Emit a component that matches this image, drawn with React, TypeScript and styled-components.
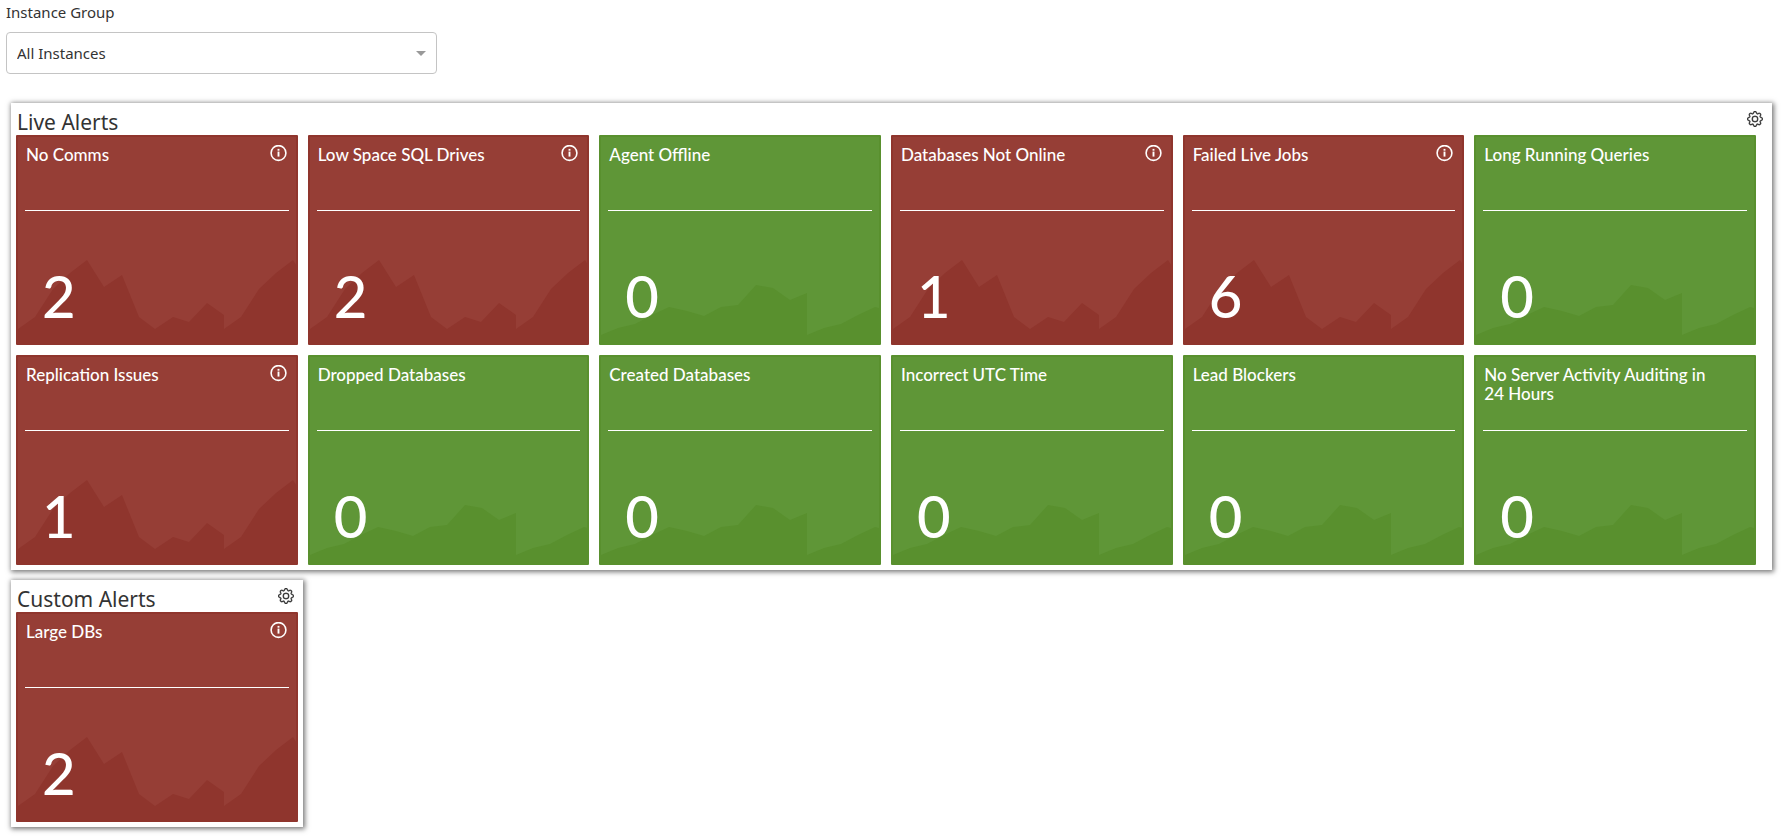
import React from "react";
import styled, { createGlobalStyle } from "styled-components";
import { BsGear } from "react-icons/bs";

type Status = "alert" | "ok";

interface Alert {
  name: string;
  count: number;
  status: Status;
}

const liveAlerts: Alert[] = [
  { name: "No Comms", count: 2, status: "alert" },
  { name: "Low Space SQL Drives", count: 2, status: "alert" },
  { name: "Agent Offline", count: 0, status: "ok" },
  { name: "Databases Not Online", count: 1, status: "alert" },
  { name: "Failed Live Jobs", count: 6, status: "alert" },
  { name: "Long Running Queries", count: 0, status: "ok" },
  { name: "Replication Issues", count: 1, status: "alert" },
  { name: "Dropped Databases", count: 0, status: "ok" },
  { name: "Created Databases", count: 0, status: "ok" },
  { name: "Incorrect UTC Time", count: 0, status: "ok" },
  { name: "Lead Blockers", count: 0, status: "ok" },
  { name: "No Server Activity Auditing in 24 Hours", count: 0, status: "ok" },
];

const customAlerts: Alert[] = [{ name: "Large DBs", count: 2, status: "alert" }];

const palette = {
  alert: { base: "#963e36", dark: "#8f352d" },
  ok: { base: "#5f9637", dark: "#59902e" },
};

const trend = {
  alert:
    "0,192 17,180 35,152 52,136 69,123 86,150 104,138 121,180 137,192 155,180 171,185 189,166 206,178 206,210 0,210",
  ok: "0,198 17,191 34,187 51,178 68,170 86,174 103,179 120,170 137,168 155,148 172,151 189,163 206,156 206,210 0,210",
};

const trendRepeats = [0, 206, 412, 618];

const GlobalStyle = createGlobalStyle`
  * { box-sizing: border-box; }
  body {
    margin: 0;
    background: #fff;
    color: #333;
    font-family: "Noto Sans", "Open Sans", sans-serif;
  }
`;

const Page = styled.main`
  display: flex;
  flex-direction: column;
  padding: 2px 12px 8px 11px;
`;

const Filter = styled.div`
  display: flex;
  flex-direction: column;
  gap: 10px;
  width: 431px;
  max-width: 100%;
  margin: 0 0 29px -5px;
`;

const FilterLabel = styled.label`
  font-size: 15px;
  line-height: 20px;
`;

const SelectBox = styled.div`
  display: grid;
  align-items: center;

  > * {
    grid-area: 1 / 1;
  }
`;

const Select = styled.select`
  appearance: none;
  width: 100%;
  height: 42px;
  padding: 0 32px 0 10px;
  border: 1px solid #c4c4c4;
  border-radius: 4px;
  background: #fff;
  color: #333;
  font: inherit;
  font-size: 15px;
`;

const Caret = styled.svg`
  justify-self: end;
  margin-right: 11px;
  pointer-events: none;
`;

const Panel = styled.section<{ $compact?: boolean }>`
  width: ${(p) => (p.$compact ? "292px" : "100%")};
  margin-bottom: 10px;
  padding: 0 ${(p) => (p.$compact ? 5 : 16)}px 5px 5px;
  background: #fff;
  box-shadow: 1px 1px 5px 1px #777;
`;

const PanelHeader = styled.header<{ $compact?: boolean }>`
  display: flex;
  align-items: flex-start;
  justify-content: space-between;
  height: 32px;
  padding: 4px 0 0 1px;
  margin-right: ${(p) => (p.$compact ? 4 : -7)}px;
`;

const PanelTitle = styled.h2`
  margin: 0;
  font-size: 21px;
  font-weight: 400;
  line-height: 30px;
`;

const IconButton = styled.button`
  display: flex;
  flex-shrink: 0;
  margin: 0;
  padding: 0;
  border: 0;
  background: none;
  color: inherit;
  cursor: pointer;
`;

const GearButton = styled(IconButton)`
  margin-top: 4px;
`;

const TileGrid = styled.div<{ $compact?: boolean }>`
  display: grid;
  grid-template-columns: repeat(${(p) => (p.$compact ? 1 : 6)}, minmax(0, 1fr));
  gap: 10px;
`;

const TileCard = styled.article<{ $status: Status }>`
  display: grid;
  min-height: 210px;
  overflow: hidden;
  border: 2px solid ${(p) => palette[p.$status].dark};
  border-radius: 1px;
  background: ${(p) => palette[p.$status].base};
  color: #fff;
  font-family: Lato, "Noto Sans", sans-serif;
  font-weight: 500;

  > * {
    grid-area: 1 / 1;
    min-width: 0;
  }
`;

const TrendArt = styled.svg`
  width: 100%;
  height: 206px;
  align-self: end;
`;

const TileBody = styled.div`
  display: flex;
  flex-direction: column;
  padding: 0 7px;
`;

const TileHeader = styled.div`
  display: grid;
  grid-template-columns: minmax(0, 1fr) 17px;
  align-items: start;
  gap: 12px;
  height: 74px;
  padding: 8px 2px 0 1px;
  border-bottom: 1px solid #fff;
`;

const TileTitle = styled.h3`
  margin: 0;
  font-size: 17px;
  font-weight: inherit;
  line-height: 19px;
`;

const Count = styled.div`
  padding: 50px 0 0 17px;
  font-size: 58px;
  line-height: 70px;
`;

function InfoIcon() {
  return (
    <svg width="17" height="17" viewBox="0 0 17 17" fill="none" stroke="currentColor" aria-hidden="true">
      <circle cx="8.5" cy="8" r="7.4" strokeWidth="1.6" />
      <path d="M8.5 6.6v5" strokeWidth="1.9" />
      <path d="M8.5 3.9v1.8" strokeWidth="1.9" />
    </svg>
  );
}

function Tile({ alert }: { alert: Alert }) {
  return (
    <TileCard $status={alert.status}>
      <TrendArt aria-hidden="true">
        {trendRepeats.map((x) => (
          <polygon
            key={x}
            points={trend[alert.status]}
            fill={palette[alert.status].dark}
            transform={`translate(${x} 0)`}
          />
        ))}
      </TrendArt>
      <TileBody>
        <TileHeader>
          <TileTitle>{alert.name}</TileTitle>
          {alert.status === "alert" && (
            <IconButton type="button" aria-label={`About ${alert.name}`}>
              <InfoIcon />
            </IconButton>
          )}
        </TileHeader>
        <Count>{alert.count}</Count>
      </TileBody>
    </TileCard>
  );
}

function AlertPanel({ title, alerts, compact }: { title: string; alerts: Alert[]; compact?: boolean }) {
  return (
    <Panel $compact={compact}>
      <PanelHeader $compact={compact}>
        <PanelTitle>{title}</PanelTitle>
        <GearButton type="button" aria-label={`${title} settings`}>
          <BsGear size={16} strokeWidth={0.3} />
        </GearButton>
      </PanelHeader>
      <TileGrid $compact={compact}>
        {alerts.map((alert) => (
          <Tile key={alert.name} alert={alert} />
        ))}
      </TileGrid>
    </Panel>
  );
}

export default function App() {
  return (
    <>
      <GlobalStyle />
      <Page>
        <Filter>
          <FilterLabel htmlFor="instance-group">Instance Group</FilterLabel>
          <SelectBox>
            <Select id="instance-group" defaultValue="all">
              <option value="all">All Instances</option>
            </Select>
            <Caret width="10" height="5" viewBox="0 0 10 5" aria-hidden="true">
              <path d="M0 0h10L5 5z" fill="#999" />
            </Caret>
          </SelectBox>
        </Filter>
        <AlertPanel title="Live Alerts" alerts={liveAlerts} />
        <AlertPanel title="Custom Alerts" alerts={customAlerts} compact />
      </Page>
    </>
  );
}
